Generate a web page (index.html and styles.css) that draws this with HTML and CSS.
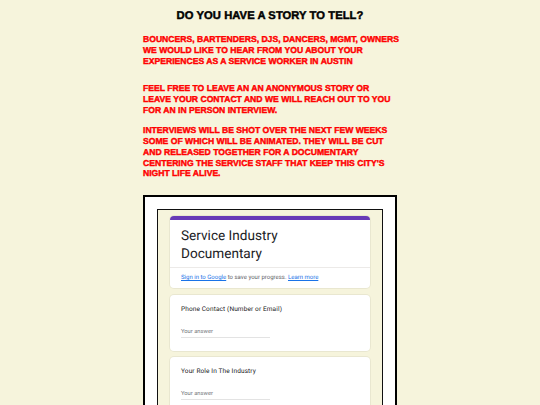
FILE: index.html
```html
<!DOCTYPE html>
<html lang="en">
<head>
<meta charset="utf-8">
<title>Do you have a story to tell?</title>
<link rel="stylesheet" href="styles.css">
</head>
<body>
<main class="page">
  <h1 class="headline">DO YOU HAVE A STORY TO TELL?</h1>
  <p class="call call-first">BOUNCERS, BARTENDERS, DJS, DANCERS, MGMT, OWNERS<br>WE WOULD LIKE TO HEAR FROM YOU ABOUT YOUR<br>EXPERIENCES AS A SERVICE WORKER IN AUSTIN</p>
  <p class="call call-second">FEEL FREE TO LEAVE AN AN ANONYMOUS STORY OR<br>LEAVE YOUR CONTACT AND WE WILL REACH OUT TO YOU<br>FOR AN IN PERSON INTERVIEW.</p>
  <p class="call call-third">INTERVIEWS WILL BE SHOT OVER THE NEXT FEW WEEKS<br>SOME OF WHICH WILL BE ANIMATED. THEY WILL BE CUT<br>AND RELEASED TOGETHER FOR A DOCUMENTARY<br>CENTERING THE SERVICE STAFF THAT KEEP THIS CITY'S<br>NIGHT LIFE ALIVE.</p>

  <div class="frame">
    <div class="embed">
      <section class="card card-head">
        <div class="head-title">Service Industry Documentary</div>
        <div class="head-sign"><a class="link" href="#">Sign in to Google</a> to save your progress. <a class="link" href="#">Learn more</a></div>
      </section>
      <section class="card question">
        <div class="q-label">Phone Contact (Number or Email)</div>
        <div class="q-answer">Your answer</div>
      </section>
      <section class="card question">
        <div class="q-label">Your Role In The Industry</div>
        <div class="q-answer">Your answer</div>
      </section>
    </div>
  </div>
</main>
</body>
</html>
```
FILE: styles.css
```css
html, body {
  margin: 0;
  padding: 0;
}
body {
  background: #f6f4dc;
  height: 405px;
  overflow: hidden;
  text-rendering: geometricPrecision;
}
.page {
  box-sizing: border-box;
  width: 254px;
  height: 405px;
  margin: 0 auto;
  padding-top: 9px;
  display: flex;
  flex-direction: column;
}
.headline {
  margin: 0;
  font-family: "Liberation Sans", Arial, sans-serif;
  font-weight: bold;
  font-size: 11.2px;
  line-height: 14px;
  letter-spacing: 0.07px;
  text-align: center;
  color: #000;
  -webkit-text-stroke: 0.45px #000;
}
.call {
  margin: 0;
  font-family: "Liberation Sans", Arial, sans-serif;
  font-weight: bold;
  font-size: 8.6px;
  line-height: 10.75px;
  white-space: nowrap;
  color: #ff0000;
  -webkit-text-stroke: 0.4px #ff0000;
}
.call-first { margin-top: 11.4px; }
.call-second { margin-top: 16.75px; }
.call-third { margin-top: 9.75px; }

.frame {
  flex: 1 1 0;
  min-height: 0;
  margin-top: 16px;
  border: 2px solid #000;
  border-bottom: none;
  background: #fff;
  padding: 12px 12px 0 12px;
  display: flex;
  flex-direction: column;
}
.embed {
  flex: 1 1 0;
  min-height: 0;
  border: 1px solid #111;
  border-bottom: none;
  background: #f6f4dc;
  padding: 6px 12px 0 12px;
  overflow: hidden;
  display: flex;
  flex-direction: column;
  gap: 6.5px;
}
.card {
  background: #fff;
  border-radius: 4px;
  box-shadow: 0 0 0 1px rgba(0, 0, 0, 0.05);
  font-family: Roboto, "Liberation Sans", Arial, sans-serif;
  flex-shrink: 0;
}
.card-head {
  border-top: 4px solid #673ab7;
}
.head-title {
  padding: 8px 11px 4px 11px;
  font-size: 13.6px;
  line-height: 17.5px;
  color: #202124;
  border-bottom: 1px solid #eceae8;
}
.head-sign {
  padding: 0 11px;
  height: 20px;
  line-height: 20px;
  font-size: 6px;
  color: #5f6368;
}
.link {
  color: #1a73e8;
  text-decoration: underline;
}
.question {
  padding: 10px 11px 13px 11px;
}
.q-label {
  font-size: 6.5px;
  line-height: 9px;
  letter-spacing: 0.12px;
  color: #202124;
}
.q-answer {
  margin-top: 14px;
  width: 89px;
  font-size: 5.8px;
  line-height: 8px;
  color: #70757a;
  padding-bottom: 1px;
  border-bottom: 1px solid #e3e3e3;
}
```
